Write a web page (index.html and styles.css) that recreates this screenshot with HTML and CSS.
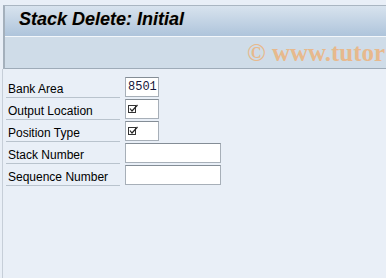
FILE: index.html
```html
<!DOCTYPE html>
<html>
<head>
<meta charset="utf-8">
<link rel="stylesheet" href="styles.css">
</head>
<body>
<div class="frame">
  <header class="titlebar"><h1 class="title">Stack Delete: Initial</h1></header>
  <div class="toolbar"><span class="wm">© www.tutor</span></div>
</div>
<main class="content">
  <div class="row"><span class="label">Bank Area</span><span class="field short mono">8501</span></div>
  <div class="row"><span class="label">Output Location</span><span class="field short"><svg class="chk" width="10" height="10" viewBox="0 0 10 10"><rect x="0.5" y="1.5" width="7" height="7" fill="none" stroke="#333" stroke-width="1"/><path d="M2 4.5 L4 7 L9.5 1" fill="none" stroke="#222" stroke-width="1.2"/></svg></span></div>
  <div class="row"><span class="label">Position Type</span><span class="field short"><svg class="chk" width="10" height="10" viewBox="0 0 10 10"><rect x="0.5" y="1.5" width="7" height="7" fill="none" stroke="#333" stroke-width="1"/><path d="M2 4.5 L4 7 L9.5 1" fill="none" stroke="#222" stroke-width="1.2"/></svg></span></div>
  <div class="row"><span class="label">Stack Number</span><span class="field long"></span></div>
  <div class="row"><span class="label">Sequence Number</span><span class="field long"></span></div>
</main>
</body>
</html>
```

FILE: styles.css
```css
html, body {
  margin: 0;
  padding: 0;
}
body {
  width: 386px;
  height: 278px;
  overflow: hidden;
  background: #e9eff7;
  font-family: "Liberation Sans", Arial, sans-serif;
}
.frame {
  margin: 5px 0 0 3px;
  border-left: 2px solid #a4b0bc;
  border-top: 1px solid #aab6c2;
}
.titlebar {
  height: 30px;
  background: linear-gradient(#d8e3ee, #aec4db);
  padding-left: 14px;
}
.title {
  margin: 0;
  font-size: 18px;
  line-height: 26px;
  font-weight: bold;
  font-style: italic;
  color: #000;
  text-shadow: 0 0 1px rgba(200, 140, 60, 0.45);
  white-space: nowrap;
}
.toolbar {
  height: 31px;
  border-top: 1px solid #f3f7fb;
  border-bottom: 1px solid #9eabb8;
  background: #cfdce8;
  padding-left: 242px;
  overflow: hidden;
  white-space: nowrap;
}
.wm {
  font-family: "Liberation Serif", "Times New Roman", serif;
  font-size: 25px;
  line-height: 32px;
  font-weight: bold;
  color: #e7b98d;
}
.content {
  margin-left: 2px;
  border-left: 1px solid #c6ced8;
  height: 210px;
  padding-top: 8px;
  display: flex;
  flex-direction: column;
  gap: 2px;
}
.row {
  display: flex;
  align-items: flex-start;
  height: 20px;
}
.label {
  margin-left: 3px;
  width: 112px;
  height: 20px;
  padding-left: 2px;
  line-height: 24px;
  font-size: 12px;
  color: #000;
  border-bottom: 1px solid #b9c3cd;
  white-space: nowrap;
  box-sizing: content-box;
}
.field {
  margin-left: 5px;
  height: 18px;
  background: #fff;
  border: 1px solid #a7afb8;
  border-top-color: #848d96;
  box-sizing: content-box;
  display: flex;
  align-items: center;
}
.short {
  width: 32px;
}
.long {
  width: 94px;
}
.mono {
  font-family: "Liberation Mono", "Courier New", monospace;
  font-size: 12px;
  color: #16163a;
  padding-left: 2px;
  width: 30px;
  line-height: 18px;
}
.chk {
  margin-left: 2px;
  margin-top: -1px;
}
```
